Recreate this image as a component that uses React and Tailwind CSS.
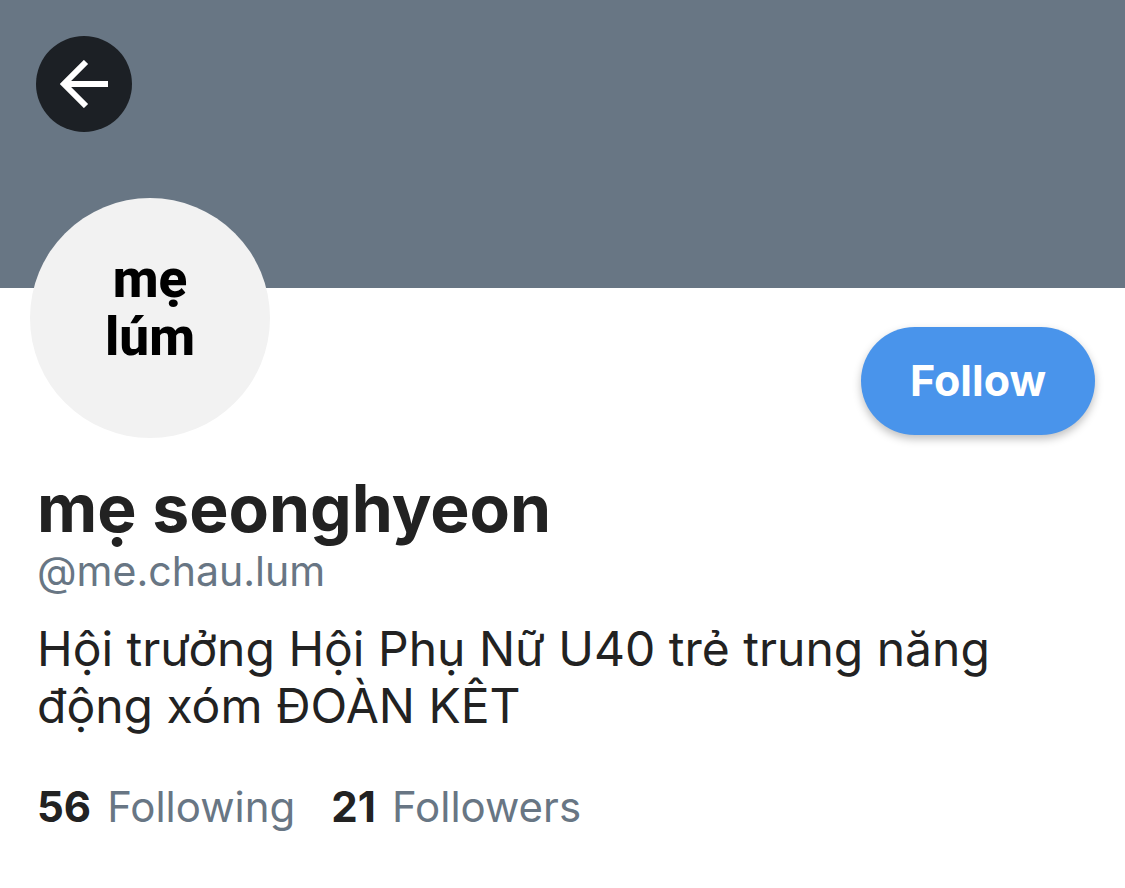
import React from "react";

const stats = [
  { count: 56, label: "Following" },
  { count: 21, label: "Followers" },
];

const BackArrow = () => (
  <svg viewBox="0 0 48 48" className="w-12 h-12" fill="none" stroke="currentColor" strokeWidth="6" aria-hidden="true">
    <path d="M26 2 4 24l22 22M4 24h44" />
  </svg>
);

const Avatar = () => (
  <div className="w-60 h-60 pb-5 rounded-full bg-[#f2f2f2] flex items-center justify-center text-center text-black font-extrabold text-[53px] leading-[58px] font-[Roboto,sans-serif]">
    <span>
      mẹ
      <br />
      lúm
    </span>
  </div>
);

const App = () => {
  return (
    <main className="min-h-screen bg-white text-[#222222] font-[Inter,sans-serif]">
      <header className="h-72 bg-[#687684] p-9">
        <button
          type="button"
          aria-label="Back"
          className="w-24 h-24 rounded-full bg-[#1c2025] text-white flex items-center justify-center"
        >
          <BackArrow />
        </button>
      </header>

      <section className="px-[30px]">
        <div className="flex items-end justify-between -mt-[90px]">
          <Avatar />
          <button
            type="button"
            className="h-[108px] px-[49px] pb-0.5 mb-[3px] rounded-full bg-[#4994eb] text-white text-[43px] font-bold shadow-[0_4px_8px_rgba(0,0,0,0.25)]"
          >
            Follow
          </button>
        </div>

        <div className="px-[7px] pt-[30px]">
          <h1 className="text-[66px] leading-[80px] font-bold">mẹ seonghyeon</h1>
          <p className="text-[41px] leading-[46px] text-[#687684]">@me.chau.lum</p>
          <p className="mt-[26px] text-[48px] leading-[57px] max-w-[1000px]">
            Hội trưởng Hội Phụ Nữ U40 trẻ trung năng động xóm ĐOÀN KÊT
          </p>
          <div className="mt-12 flex gap-9 text-[42px] leading-[50px]">
            {stats.map(({ count, label }) => (
              <a key={label} href={`#${label.toLowerCase()}`} className="flex gap-4 text-[#687684]">
                <span className="font-bold text-[#222222]">{count}</span>
                <span>{label}</span>
              </a>
            ))}
          </div>
        </div>
      </section>
    </main>
  );
};

export default App;
